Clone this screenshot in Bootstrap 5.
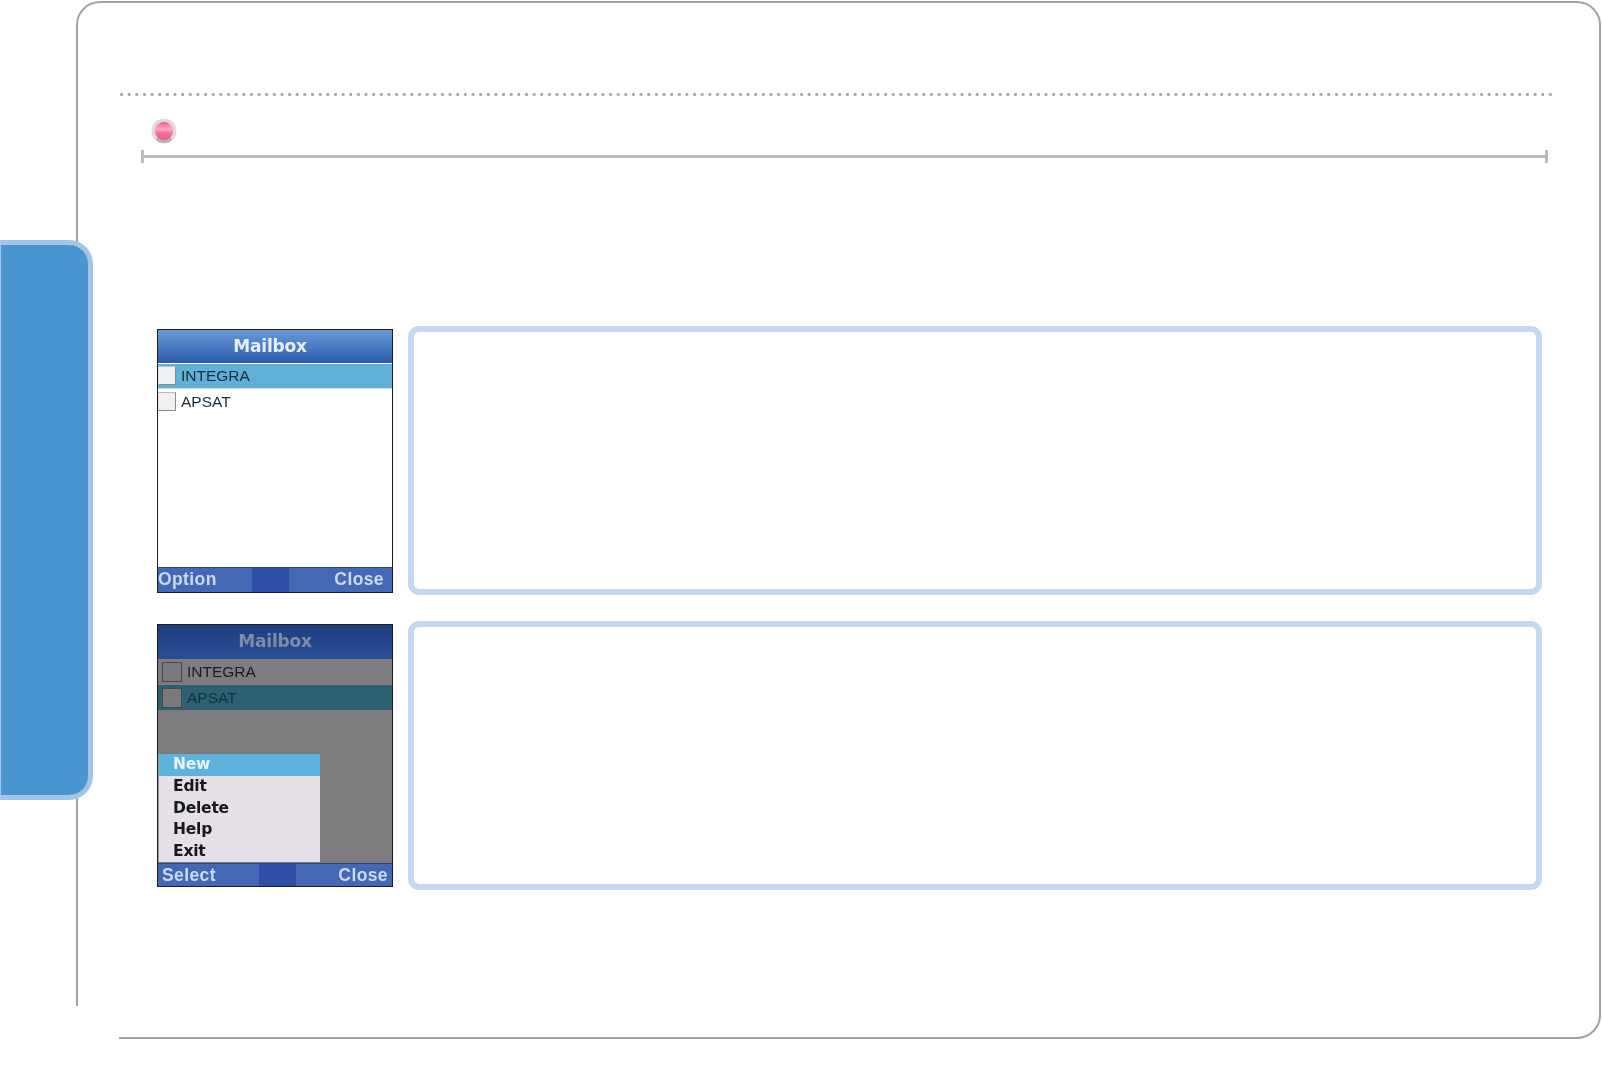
<!DOCTYPE html>
<html lang="en">
<head>
    <meta charset="UTF-8">
    <meta name="viewport" content="width=device-width, initial-scale=1.0">
    <title>Mailbox</title>
    <link href="https://cdn.jsdelivr.net/npm/bootstrap@5.3.0/dist/css/bootstrap.min.css" rel="stylesheet">
    <style>
        html, body { height: 1075px; overflow: hidden; background: #fff; }
        body { font-family: "Liberation Sans", Arial, sans-serif; position: relative; }

        .page-frame { margin: 1px 1px 0 76px; height: 1038px; border: 2px solid #a0a2a6; border-radius: 24px; position: relative; background: #fff; }
        /* gap in the frame at the lower left corner */
        .frame-gap { position: absolute; left: -3px; bottom: -3px; width: 44px; height: 34px; background: #fff; }
        .side-tab { position: absolute; left: 0; top: 240px; width: 93px; height: 560px; background: #4a95d0; border: 5px solid #a4c4ea; border-left: 1px solid #a4c4ea; border-radius: 0 24px 24px 0; }

        .dot-rule { margin: 90px 0 0 42px; width: 1434px; height: 3px; background: radial-gradient(circle at 1.5px 1.5px, #a3a5a8 1.3px, transparent 1.6px) repeat-x; background-size: 7.65px 3px; }
        .pink-bullet { margin: 23px 0 0 74px; width: 24px; height: 24px; border-radius: 50%; border: 3px solid #dcdadc; border-bottom-color: #b4b2b4; background: linear-gradient(#e8507f 0, #f47a9f 14%, #fbaec6 42%, #f56f98 60%, #f2568a 100%); box-shadow: 0 0 1px #888; }
        .head-rule { margin: 7px 0 0 63px; width: 1407px; height: 13px; border-left: 3px solid #bcbcbe; border-right: 3px solid #bcbcbe; background: linear-gradient(#bcbcbe, #bcbcbe) center / 100% 3px no-repeat; }

        .shot-list { margin: 163px 0 0 79px; gap: 26px; width: 1385px; }
        .shot-row { gap: 15px; height: 269px; }
        .note-box { width: 1135px; height: 100%; border: 6px solid #c5d8f0; border-radius: 11px; }

        .phone { width: 236px; height: 264px; border: 1px solid #1c1c22; background: #fff; overflow: hidden; position: relative; filter: blur(.45px); flex: none; }
        .phone-head { height: 33px; background: linear-gradient(#6a9ad8, #4a7cc4 50%, #2c58a6); color: #e6eef8; font: bold 17px/33px "DejaVu Sans", sans-serif; letter-spacing: -.2px; padding-right: 10px; }
        .phone-body { height: 204px; padding-top: 1px; }
        .phone-row { height: 25px; font: 15.5px/25px "Liberation Sans", sans-serif; color: #1a2a3a; padding-left: 0; gap: 5px; }
        .phone-row.is-on { background: #62b0d8; border-bottom: 1px solid #bfe0f0; }
        .tick-box { width: 18px; height: 19px; border: 1px solid #8c8c8c; border-left-color: #ddd; border-top-color: #bbb; background: #f2eff2; flex: none; }
        .phone-foot { height: 25px; border-top: 1px solid #2a4688; color: #ccd9f2; font: bold 17.5px/23px "Liberation Sans", sans-serif; letter-spacing: .4px; padding: 0 8px 0 0; background: linear-gradient(90deg, #4468b6 0, #4468b6 40%, #2e4ea8 40%, #2e4ea8 56%, #4468b6 56%); }

        .phone.is-dim { background: #7f7c80; height: 263px; }
        .is-dim .phone-head { height: 34px; line-height: 32px; background: linear-gradient(#1e3d7e, #2a4e96); color: #7e8ca8; padding: 0; }
        .is-dim .phone-body { height: 204px; padding-top: 0; position: relative; }
        .is-dim .phone-row { padding-left: 4px; color: #1a1a1e; height: 25px; line-height: 25px; margin-bottom: 1px; }
        .is-dim .phone-row.is-on { background: #2f5f72; border: 0; color: #12303c; }
        .is-dim .tick-box { background: #7a7a7c; border: 1px solid #4a4a4a; width: 20px; height: 20px; }
        .is-dim .phone-foot { padding: 0 4px; background: linear-gradient(90deg, #4468b6 0, #4468b6 43%, #2e4ea8 43%, #2e4ea8 59%, #4468b6 59%); }

        .phone-menu { position: absolute; left: 0; bottom: 1px; width: 162px; background: #e4e0e6; border-left: 1px solid #9a9aa0; font: bold 15.5px/21.5px "DejaVu Sans", sans-serif; letter-spacing: -.2px; color: #17171c; }
        .phone-menu div { height: 21.5px; padding-left: 14px; }
        .phone-menu .is-on { background: #5db3dd; color: #e8f4fb; height: 22px; }
    </style>
</head>
<body>
    <div class="page-frame">
        <div class="frame-gap"></div>
        <div class="dot-rule"></div>
        <div class="pink-bullet"></div>
        <div class="head-rule"></div>

        <div class="shot-list d-flex flex-column">
            <div class="shot-row d-flex align-items-center">
                <div class="phone">
                    <div class="phone-head text-center">Mailbox</div>
                    <div class="phone-body">
                        <div class="phone-row is-on d-flex align-items-center"><span class="tick-box"></span>INTEGRA</div>
                        <div class="phone-row d-flex align-items-center"><span class="tick-box"></span>APSAT</div>
                    </div>
                    <div class="phone-foot d-flex justify-content-between"><span>Option</span><span>Close</span></div>
                </div>
                <div class="note-box"></div>
            </div>

            <div class="shot-row d-flex align-items-center">
                <div class="phone is-dim">
                    <div class="phone-head text-center">Mailbox</div>
                    <div class="phone-body">
                        <div class="phone-row d-flex align-items-center"><span class="tick-box"></span>INTEGRA</div>
                        <div class="phone-row is-on d-flex align-items-center"><span class="tick-box"></span>APSAT</div>
                        <div class="phone-menu">
                            <div class="is-on">New</div>
                            <div>Edit</div>
                            <div>Delete</div>
                            <div>Help</div>
                            <div>Exit</div>
                        </div>
                    </div>
                    <div class="phone-foot d-flex justify-content-between"><span>Select</span><span>Close</span></div>
                </div>
                <div class="note-box"></div>
            </div>
        </div>
    </div>
    <div class="side-tab"></div>
    <script src="https://cdn.jsdelivr.net/npm/bootstrap@5.3.0/dist/js/bootstrap.bundle.min.js"></script>
</body>
</html>
